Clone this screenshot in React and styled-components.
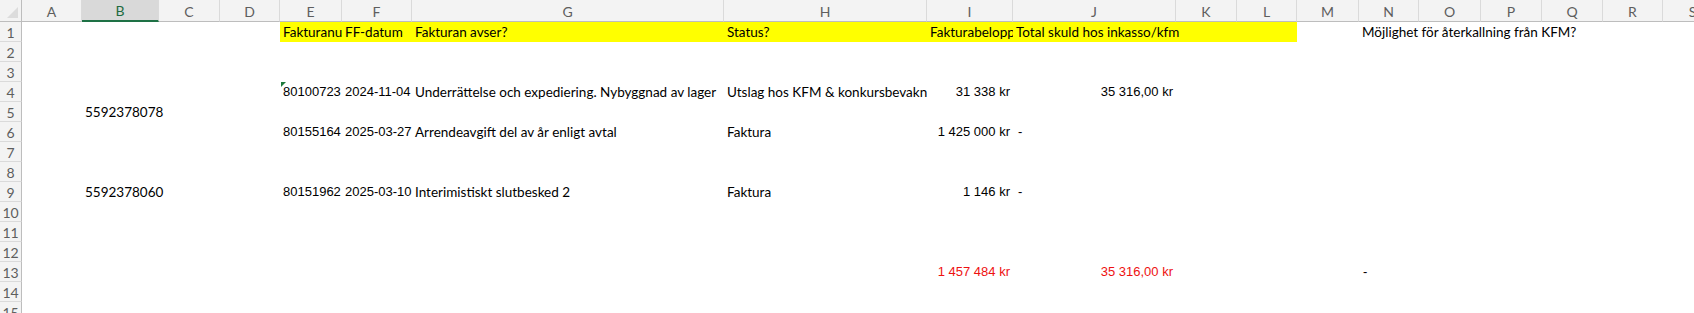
import React from 'react';
import styled, { createGlobalStyle } from 'styled-components';

const COLUMNS = [
  { key: 'A', width: 60 },
  { key: 'B', width: 77 },
  { key: 'C', width: 61 },
  { key: 'D', width: 60 },
  { key: 'E', width: 62 },
  { key: 'F', width: 70 },
  { key: 'G', width: 312 },
  { key: 'H', width: 203 },
  { key: 'I', width: 86 },
  { key: 'J', width: 163 },
  { key: 'K', width: 61 },
  { key: 'L', width: 60 },
  { key: 'M', width: 62 },
  { key: 'N', width: 60 },
  { key: 'O', width: 62 },
  { key: 'P', width: 61 },
  { key: 'Q', width: 61 },
  { key: 'R', width: 60 },
  { key: 'S', width: 60 },
];

const TEMPLATE = `22px ${COLUMNS.map((c) => `${c.width}px`).join(' ')} 1fr`;

const TEXT_FONT = `'Lato', 'Noto Sans', sans-serif`;
const NUM_FONT = `'Liberation Sans', Arial, sans-serif`;

// cell: { v, font: 'num' | 'text', align, color, clip, fill, pad, flag, spill }
const yellow = (v, extra = {}) => ({ v, fill: '#ffff00', clip: true, ...extra });

const ROWS = {
  1: {
    E: yellow('Fakturanummer'),
    F: yellow('FF-datum'),
    G: yellow('Fakturan avser?'),
    H: yellow('Status?'),
    I: yellow('Fakturabelopp'),
    J: yellow('Total skuld hos inkasso/kfm', { clip: false, spill: true }),
    K: yellow(''),
    L: yellow(''),
    N: { v: 'Möjlighet för återkallning från KFM?', spill: true },
  },
  4: {
    E: { v: '80100723', font: 'num', clip: true, flag: true },
    F: { v: '2024-11-04', font: 'num', clip: true },
    G: { v: 'Underrättelse och expediering. Nybyggnad av lager', clip: true },
    H: { v: 'Utslag hos KFM & konkursbevakning', clip: true },
    I: { v: '31 338 kr', font: 'num', align: 'right' },
    J: { v: '35 316,00 kr', font: 'num', align: 'right' },
  },
  5: {
    B: { v: '5592378078' },
  },
  6: {
    E: { v: '80155164', font: 'num', clip: true },
    F: { v: '2025-03-27', font: 'num', clip: true },
    G: { v: 'Arrendeavgift del av år enligt avtal' },
    H: { v: 'Faktura' },
    I: { v: '1 425 000 kr', font: 'num', align: 'right' },
    J: { v: '-', font: 'num', pad: 5 },
  },
  9: {
    B: { v: '5592378060' },
    E: { v: '80151962', font: 'num', clip: true },
    F: { v: '2025-03-10', font: 'num', clip: true },
    G: { v: 'Interimistiskt slutbesked 2' },
    H: { v: 'Faktura' },
    I: { v: '1 146 kr', font: 'num', align: 'right' },
    J: { v: '-', font: 'num', pad: 5 },
  },
  13: {
    I: { v: '1 457 484 kr', font: 'num', align: 'right', color: '#ee1111' },
    J: { v: '35 316,00 kr', font: 'num', align: 'right', color: '#ee1111' },
    N: { v: '-', font: 'num', pad: 4 },
  },
};

const GlobalStyle = createGlobalStyle`
  html, body {
    margin: 0;
    padding: 0;
    background: #ffffff;
    overflow: hidden;
  }
  body {
    font-family: ${TEXT_FONT};
  }
`;

const Sheet = styled.div`
  width: 1694px;
  height: 313px;
  overflow: hidden;
  background: #ffffff;
`;

const GridRow = styled.div`
  display: grid;
  grid-template-columns: ${TEMPLATE};
  height: ${(p) => p.$height}px;
`;

const Corner = styled.div`
  position: relative;
  background: #f3f3f3;
  border-bottom: 1px solid #bdbdbd;
  border-right: 1px solid #bdbdbd;
  box-sizing: border-box;

  &::after {
    content: '';
    position: absolute;
    right: 3px;
    bottom: 3px;
    border-style: solid;
    border-width: 0 0 11px 11px;
    border-color: transparent transparent #dcdcdc transparent;
  }
`;

const ColHead = styled.div`
  display: flex;
  align-items: center;
  justify-content: center;
  box-sizing: border-box;
  background: ${(p) => (p.$active ? '#d9d9d9' : '#f3f3f3')};
  border-right: 1px solid #dadada;
  border-bottom: ${(p) => (p.$active ? '2px solid #1e7145' : '1px solid #bdbdbd')};
  color: ${(p) => (p.$active ? '#1e6b41' : '#5e5e5e')};
  font-family: ${TEXT_FONT};
  font-size: 14px;
  padding-top: 1px;
`;

const RowHead = styled.div`
  display: flex;
  align-items: center;
  justify-content: center;
  box-sizing: border-box;
  background: #f3f3f3;
  border-right: 1px solid #bdbdbd;
  border-bottom: 1px solid #dadada;
  color: #5e5e5e;
  font-family: ${TEXT_FONT};
  font-size: 14px;
  padding-top: 1px;
`;

const Cell = styled.div`
  position: relative;
  z-index: ${(p) => (p.$spill ? 1 : 0)};
  display: flex;
  align-items: flex-end;
  justify-content: ${(p) => (p.$align === 'right' ? 'flex-end' : 'flex-start')};
  box-sizing: border-box;
  padding: 0 ${(p) => (p.$align === 'right' ? 3 : 0)}px 2px ${(p) => p.$pad}px;
  background: ${(p) => p.$fill || 'transparent'};
  color: ${(p) => p.$color || '#000000'};
  font-family: ${(p) => (p.$font === 'num' ? NUM_FONT : TEXT_FONT)};
  font-size: ${(p) => (p.$font === 'num' ? 13 : 13.5)}px;
  line-height: 16px;
  white-space: nowrap;
  overflow: ${(p) => (p.$clip ? 'hidden' : 'visible')};
  min-width: 0;
`;

const ErrorFlag = styled.span`
  position: absolute;
  top: 0;
  left: 1px;
  width: 0;
  height: 0;
  border-style: solid;
  border-width: 5px 5px 0 0;
  border-color: #1e7a3c transparent transparent transparent;
`;

const SpreadsheetRow = ({ index }) => {
  const data = ROWS[index] || {};
  return (
    <GridRow $height={20}>
      <RowHead>{index}</RowHead>
      {COLUMNS.map((col) => {
        const cell = data[col.key];
        if (!cell) return <Cell key={col.key} $pad={3} />;
        return (
          <Cell
            key={col.key}
            $align={cell.align}
            $color={cell.color}
            $font={cell.font}
            $clip={cell.clip}
            $fill={cell.fill}
            $spill={cell.spill}
            $pad={cell.pad ?? 3}
          >
            {cell.flag && <ErrorFlag />}
            {cell.v}
          </Cell>
        );
      })}
      <Cell $pad={3} />
    </GridRow>
  );
};

export default function App() {
  const rows = Array.from({ length: 15 }, (_, i) => i + 1);
  return (
    <Sheet>
      <GlobalStyle />
      <GridRow $height={22}>
        <Corner />
        {COLUMNS.map((col) => (
          <ColHead key={col.key} $active={col.key === 'B'}>
            {col.key}
          </ColHead>
        ))}
        <ColHead />
      </GridRow>
      {rows.map((r) => (
        <SpreadsheetRow key={r} index={r} />
      ))}
    </Sheet>
  );
}
